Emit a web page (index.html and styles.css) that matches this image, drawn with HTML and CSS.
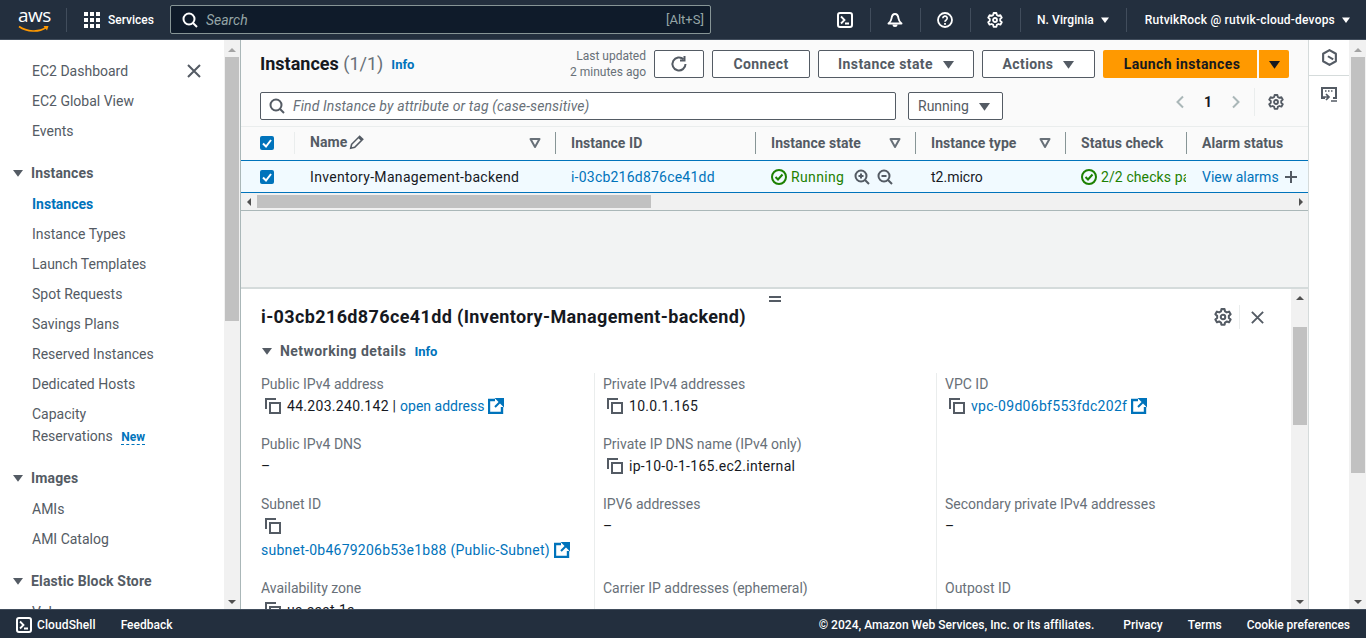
FILE: index.html
```html
<!DOCTYPE html>
<html lang="en">
<head>
  <meta charset="UTF-8" />
  <title>Instances | EC2</title>
  <link rel="stylesheet" href="styles.css">
</head>
<body>
  <svg class="defs" width="0" height="0">
    <symbol id="i-caret" viewBox="0 0 16 16"><path d="M0 3h16L8 14z" fill="currentColor"/></symbol>
    <symbol id="i-filter" viewBox="0 0 12 12"><path d="M1.5 2h9L6 10z" fill="none" stroke="currentColor" stroke-width="2" stroke-linejoin="round"/></symbol>
    <symbol id="i-search" viewBox="0 0 16 16"><circle cx="7" cy="7" r="5.5" fill="none" stroke="currentColor" stroke-width="2"/><path d="M11 11l4 4" stroke="currentColor" stroke-width="2" fill="none"/></symbol>
    <symbol id="i-gear" viewBox="0 0 16 16"><path d="M6.6 1h2.8l.4 2 1.6.9 2-.7 1.4 2.4-1.6 1.4v1.9l1.6 1.4-1.4 2.4-2-.7-1.6.9-.4 2H6.6l-.4-2-1.6-.9-2 .7-1.4-2.4 1.6-1.4V7L1.2 5.6l1.4-2.4 2 .7 1.6-.9z" fill="none" stroke="currentColor" stroke-width="1.8" stroke-linejoin="round"/><circle cx="8" cy="8" r="2" fill="none" stroke="currentColor" stroke-width="1.8"/></symbol>
    <symbol id="i-close" viewBox="0 0 16 16"><path d="M2 2l12 12M14 2L2 14" stroke="currentColor" stroke-width="2" fill="none"/></symbol>
    <symbol id="i-copy" viewBox="0 0 16 16"><path d="M1 11V1h10" fill="none" stroke="currentColor" stroke-width="2"/><rect x="5" y="5" width="10" height="10" fill="none" stroke="currentColor" stroke-width="2"/></symbol>
    <symbol id="i-ext" viewBox="0 0 16 16"><path d="M7 2H1v13h13V9" fill="none" stroke="currentColor" stroke-width="2.4"/><path d="M9 1h6v6zM13 3L7 9" fill="currentColor" stroke="currentColor" stroke-width="2"/></symbol>
    <symbol id="i-ok" viewBox="0 0 16 16"><circle cx="8" cy="8" r="7" fill="none" stroke="currentColor" stroke-width="2"/><path d="M4.5 8l2.5 2.5 4.5-5" fill="none" stroke="currentColor" stroke-width="2"/></symbol>
    <symbol id="i-terminal" viewBox="0 0 16 16"><rect x="1" y="1" width="14" height="14" rx="2" fill="none" stroke="currentColor" stroke-width="2"/><path d="M4 4.5L7.5 8 4 11.5M8 11.5h4" fill="none" stroke="currentColor" stroke-width="1.8"/></symbol>
    <symbol id="i-check" viewBox="0 0 14 14"><path d="M3 7.500l3 3 5-6.500" fill="none" stroke="#fff" stroke-width="2"/></symbol>
  </svg>

  <header class="topnav">
    <div class="aws-logo">
      <span class="aws-word">aws</span>
      <svg class="aws-smile" width="32" height="8" viewBox="0 0 32 8"><path d="M1 1.500c8 5.500 20 6 27 1" fill="none" stroke="#f90" stroke-width="1.600"/><path d="M25.500 1h5l-1.500 4.500z" fill="#f90"/></svg>
    </div>
    <span class="nav-sep"></span>
    <div class="services">
      <svg width="16" height="16" viewBox="0 0 16 16" fill="#fff"><rect width="4" height="4"/><rect x="6" width="4" height="4"/><rect x="12" width="4" height="4"/><rect y="6" width="4" height="4"/><rect x="6" y="6" width="4" height="4"/><rect x="12" y="6" width="4" height="4"/><rect y="12" width="4" height="4"/><rect x="6" y="12" width="4" height="4"/><rect x="12" y="12" width="4" height="4"/></svg>
      <span>Services</span>
    </div>
    <div class="nav-search">
      <svg class="ico16"><use href="#i-search"/></svg>
      <span class="nav-search-text">Search</span>
      <span class="nav-search-key">[Alt+S]</span>
    </div>
    <div class="nav-icons">
      <span class="nav-icon"><svg class="ico16"><use href="#i-terminal"/></svg></span>
      <span class="nav-icon"><svg class="ico16" viewBox="0 0 16 16"><path d="M8 2C5.500 2 4.800 4 4.500 6.500 4.200 9 3 10 1.500 11.500h13C13 10 11.800 9 11.500 6.500 11.200 4 10.500 2 8 2z" fill="none" stroke="currentColor" stroke-width="1.900" stroke-linejoin="round"/><path d="M5.500 12.500a2.500 2.500 0 0 0 5 0z" fill="currentColor"/></svg></span>
      <span class="nav-icon"><svg class="ico16" viewBox="0 0 16 16"><circle cx="8" cy="8" r="7" fill="none" stroke="currentColor" stroke-width="1.800"/><path d="M5.800 6.200a2.200 2.200 0 1 1 3.200 2c-.7.400-1 .8-1 1.600" fill="none" stroke="currentColor" stroke-width="1.700"/><rect x="7.100" y="11" width="1.800" height="1.800" fill="currentColor"/></svg></span>
      <span class="nav-icon last"><svg class="ico16"><use href="#i-gear"/></svg></span>
    </div>
    <div class="nav-menu region">N. Virginia <svg class="ico8"><use href="#i-caret"/></svg></div>
    <div class="nav-menu account">RutvikRock @ rutvik-cloud-devops <svg class="ico8"><use href="#i-caret"/></svg></div>
  </header>

  <div class="main">
    <nav class="sidebar">
      <svg class="side-close"><use href="#i-close"/></svg>
      <a class="side-link">EC2 Dashboard</a>
      <a class="side-link">EC2 Global View</a>
      <a class="side-link">Events</a>
      <div class="side-group"><svg class="ico10"><use href="#i-caret"/></svg>Instances</div>
      <a class="side-link current">Instances</a>
      <a class="side-link">Instance Types</a>
      <a class="side-link">Launch Templates</a>
      <a class="side-link">Spot Requests</a>
      <a class="side-link">Savings Plans</a>
      <a class="side-link">Reserved Instances</a>
      <a class="side-link">Dedicated Hosts</a>
      <a class="side-link two-line">Capacity<br>Reservations <span class="new-tag">New</span></a>
      <div class="side-group"><svg class="ico10"><use href="#i-caret"/></svg>Images</div>
      <a class="side-link">AMIs</a>
      <a class="side-link">AMI Catalog</a>
      <div class="side-group"><svg class="ico10"><use href="#i-caret"/></svg>Elastic Block Store</div>
      <a class="side-link">Volumes</a>
    </nav>
    <div class="vscroll side-scroll">
      <span class="arrow-up"></span>
      <span class="thumb"></span>
      <span class="arrow-down"></span>
    </div>

    <div class="content">
      <section class="list-panel">
        <div class="toolbar">
          <h1 class="panel-title">Instances <span class="count">(1/1)</span></h1>
          <a class="info">Info</a>
          <div class="updated">Last updated<br>2 minutes ago</div>
          <button class="btn btn-icon"><svg class="ico18" viewBox="0 0 18 18"><path d="M15.500 9a6.500 6.500 0 1 1-2-4.700" fill="none" stroke="currentColor" stroke-width="2"/><path d="M14.500 1v4.500H10" fill="none" stroke="currentColor" stroke-width="2"/></svg></button>
          <button class="btn btn-connect">Connect</button>
          <button class="btn btn-state">Instance state <svg class="ico11"><use href="#i-caret"/></svg></button>
          <button class="btn btn-actions">Actions <svg class="ico11"><use href="#i-caret"/></svg></button>
          <button class="btn-primary">Launch instances</button>
          <button class="btn-primary btn-split"><svg class="ico11"><use href="#i-caret"/></svg></button>
        </div>
        <div class="filterbar">
          <div class="filter-input"><svg class="ico16"><use href="#i-search"/></svg><span>Find Instance by attribute or tag (case-sensitive)</span></div>
          <div class="filter-select">Running <svg class="ico11"><use href="#i-caret"/></svg></div>
          <div class="pager">
            <svg class="pager-arrow" viewBox="0 0 10 14"><path d="M8 1.500L2.500 7 8 12.500" fill="none" stroke="currentColor" stroke-width="2"/></svg>
            <b>1</b>
            <svg class="pager-arrow" viewBox="0 0 10 14"><path d="M2 1.500L7.500 7 2 12.500" fill="none" stroke="currentColor" stroke-width="2"/></svg>
          </div>
          <div class="pager-gear"><svg class="ico16"><use href="#i-gear"/></svg></div>
        </div>

        <div class="table">
          <div class="row head">
            <div class="cell cell-check"><span class="checkbox"><svg width="14" height="14"><use href="#i-check"/></svg></span></div>
            <div class="cell sep-light"><span class="name-head">Name <svg class="ico16" viewBox="0 0 14 14"><path d="M1.500 12.500l.8-3.500 7-7 2.700 2.700-7 7zM8.500 3l2.500 2.500" fill="none" stroke="currentColor" stroke-width="1.400"/></svg></span><svg class="filter-ico"><use href="#i-filter"/></svg></div>
            <div class="cell sep">Instance ID</div>
            <div class="cell sep">Instance state<svg class="filter-ico"><use href="#i-filter"/></svg></div>
            <div class="cell sep">Instance type<svg class="filter-ico"><use href="#i-filter"/></svg></div>
            <div class="cell sep">Status check</div>
            <div class="cell sep">Alarm status</div>
          </div>
          <div class="row selected">
            <div class="cell cell-check"><span class="checkbox"><svg width="14" height="14"><use href="#i-check"/></svg></span></div>
            <div class="cell cell-name">Inventory-Management-backend</div>
            <div class="cell cell-id link">i-03cb216d876ce41dd</div>
            <div class="cell state"><span class="ok"><svg class="ico16"><use href="#i-ok"/></svg><span class="ok-text">Running</span></span>
              <svg class="zoom-ico" viewBox="0 0 16 16"><circle cx="7" cy="7" r="5.500" fill="none" stroke="currentColor" stroke-width="2"/><path d="M11 11l4 4M4.500 7h5M7 4.500v5" fill="none" stroke="currentColor" stroke-width="2"/></svg>
              <svg class="zoom-ico" viewBox="0 0 16 16"><circle cx="7" cy="7" r="5.500" fill="none" stroke="currentColor" stroke-width="2"/><path d="M11 11l4 4M4.500 7h5" fill="none" stroke="currentColor" stroke-width="2"/></svg>
            </div>
            <div class="cell">t2.micro</div>
            <div class="cell clip"><span class="ok"><svg class="ico16"><use href="#i-ok"/></svg>2/2 checks passed</span></div>
            <div class="cell"><span class="link">View alarms</span><svg class="plus-ico" viewBox="0 0 14 14"><path d="M7 1v12M1 7h12" stroke="currentColor" stroke-width="2"/></svg></div>
          </div>
        </div>
        <div class="hscroll">
          <span class="arrow-left"></span>
          <span class="hthumb"></span>
          <span class="arrow-right"></span>
        </div>
      </section>

      <div class="gap-area"></div>

      <section class="split">
        <span class="split-handle"></span>
        <div class="split-body">
          <div class="split-head">
            <h2 class="split-title">i-03cb216d876ce41dd (Inventory-Management-backend)</h2>
            <svg class="ico18 split-gear"><use href="#i-gear"/></svg>
            <span class="split-sep"></span>
            <svg class="ico14 split-close"><use href="#i-close"/></svg>
          </div>
          <div class="expander"><svg class="ico10"><use href="#i-caret"/></svg><b>Networking details</b><a class="info">Info</a></div>
          <div class="details">
            <div class="col">
              <div class="field"><label>Public IPv4 address</label><div class="val"><svg class="copy"><use href="#i-copy"/></svg>44.203.240.142 | <a class="link addr">open address</a><svg class="ext"><use href="#i-ext"/></svg></div></div>
              <div class="field"><label>Public IPv4 DNS</label><div class="val">–</div></div>
              <div class="field"><label>Subnet ID</label><div class="val"><svg class="copy"><use href="#i-copy"/></svg></div><div class="val-line"><a class="link">subnet-0b4679206b53e1b88 (Public-Subnet)</a><svg class="ext"><use href="#i-ext"/></svg></div></div>
              <div class="field"><label>Availability zone</label><div class="val"><svg class="copy"><use href="#i-copy"/></svg>us-east-1a</div></div>
            </div>
            <div class="col">
              <div class="field"><label>Private IPv4 addresses</label><div class="val"><svg class="copy"><use href="#i-copy"/></svg>10.0.1.165</div></div>
              <div class="field"><label>Private IP DNS name (IPv4 only)</label><div class="val"><svg class="copy"><use href="#i-copy"/></svg>ip-10-0-1-165.ec2.internal</div></div>
              <div class="field tall"><label>IPV6 addresses</label><div class="val">–</div></div>
              <div class="field"><label>Carrier IP addresses (ephemeral)</label><div class="val">–</div></div>
            </div>
            <div class="col">
              <div class="field"><label>VPC ID</label><div class="val"><svg class="copy"><use href="#i-copy"/></svg><a class="link">vpc-09d06bf553fdc202f</a><svg class="ext"><use href="#i-ext"/></svg></div></div>
              <div class="field empty"></div>
              <div class="field tall"><label>Secondary private IPv4 addresses</label><div class="val">–</div></div>
              <div class="field"><label>Outpost ID</label><div class="val">–</div></div>
            </div>
          </div>
        </div>
        <div class="vscroll split-scroll">
          <span class="arrow-up"></span>
          <span class="thumb"></span>
          <span class="arrow-down"></span>
        </div>
      </section>
    </div>

    <aside class="rail">
      <div class="rail-item"><svg width="17" height="17" viewBox="0 0 16 16"><path d="M8 1l6 3.500v7L8 15l-6-3.500v-7z" fill="none" stroke="currentColor" stroke-width="2" stroke-linejoin="round"/><path d="M7 6l5 3-1 1.500-5-3z" fill="currentColor"/></svg></div>
      <div class="rail-item"><svg width="18" height="18" viewBox="0 0 18 18"><path d="M5 12H2V2h14v10h-3" fill="none" stroke="currentColor" stroke-width="2"/><path d="M5 5h1.500M8 5h1.500M11 5h1.500M3 11h5M6 8l3 3-3 3M11 15h6" fill="none" stroke="currentColor" stroke-width="1.700"/></svg></div>
    </aside>
    <div class="vscroll page-scroll">
      <span class="arrow-up"></span>
      <span class="thumb"></span>
      <span class="arrow-down"></span>
    </div>
  </div>

  <footer class="bottombar">
    <svg class="ico16"><use href="#i-terminal"/></svg>
    <span class="foot-shell">CloudShell</span>
    <span class="foot-feedback">Feedback</span>
    <span class="foot-copy">© 2024, Amazon Web Services, Inc. or its affiliates.</span>
    <span class="foot-link first">Privacy</span>
    <span class="foot-link">Terms</span>
    <span class="foot-link last">Cookie preferences</span>
  </footer>
</body>
</html>
```

FILE: styles.css
```css
* { margin: 0; padding: 0; box-sizing: border-box; }
html, body { height: 100%; overflow: hidden; }
body {
  display: flex;
  flex-direction: column;
  font-family: 'Roboto', 'Noto Sans', sans-serif;
  font-size: 14px;
  color: #16191f;
  background: #fff;
}
.defs { position: absolute; }
.ico8 { width: 8px; height: 8px; }
.ico10 { width: 10px; height: 10px; }
.ico11 { width: 11px; height: 11px; }
.ico14 { width: 14px; height: 14px; }
.ico16 { width: 16px; height: 16px; }
.ico18 { width: 18px; height: 18px; }
.link, a.link { color: #0073bb; }

/* top nav */
.topnav {
  flex: 0 0 40px;
  display: flex;
  align-items: center;
  background: #232f3e;
  border-bottom: 1px solid #414d5c;
  color: #fff;
  font-size: 12px;
  font-weight: 500;
}
.aws-logo {
  width: 31px;
  margin-left: 18px;
  position: relative;
  height: 30px;
}
.aws-word {
  display: block;
  font-family: 'Open Sans', sans-serif;
  font-size: 19px;
  line-height: 20px;
  letter-spacing: -0.5px;
  font-weight: 400;
}
.aws-smile { position: absolute; left: 0; top: 20px; }
.nav-sep { width: 1px; height: 24px; background: #414d5c; margin-left: 17px; }
.services { display: flex; align-items: center; gap: 8px; margin-left: 17px; }
.nav-search {
  width: 541px;
  height: 29px;
  margin-left: 16px;
  display: flex;
  align-items: center;
  background: #0f1b2a;
  border: 1px solid #879596;
  border-radius: 2px;
  padding: 0 6px 0 11px;
  font-weight: 400;
}
.nav-search-text { font-style: italic; font-size: 14px; color: #95a5a6; margin-left: 8px; }
.nav-search-key { margin-left: auto; color: #95a5a6; font-size: 13px; }
.nav-icons { display: flex; margin-left: 110px; }
.nav-icon {
  width: 50px;
  height: 24px;
  display: flex;
  align-items: center;
  justify-content: center;
  border-right: 1px solid #414d5c;
}
.nav-menu { display: flex; align-items: center; gap: 7px; white-space: nowrap; letter-spacing: .1px; }
.region { margin-left: 16px; padding-right: 17px; height: 24px; border-right: 1px solid #414d5c; }
.account { margin-left: 18px; letter-spacing: .2px; }

/* main area */
.main { flex: 1; display: flex; min-height: 0; }
.sidebar {
  flex: 0 0 224px;
  position: relative;
  padding-top: 16px;
  overflow: hidden;
  color: #545b64;
}
.side-close { position: absolute; left: 186px; top: 23px; width: 16px; height: 16px; }
.side-link {
  display: block;
  height: 30px;
  line-height: 30px;
  padding-left: 32px;
}
.side-link.current { color: #0073bb; font-weight: 700; }
.side-link.two-line { height: 52px; line-height: 22px; padding-top: 4px; }
.side-group {
  height: 30px;
  line-height: 30px;
  margin: 12px 0 1px;
  display: flex;
  align-items: center;
  gap: 8px;
  padding-left: 13px;
  font-weight: 700;
  letter-spacing: .15px;
}
.new-tag {
  color: #0073bb;
  font-size: 12px;
  font-weight: 700;
  margin-left: 5px;
  border-bottom: 1px dashed #0073bb;
}

/* fake scrollbars */
.vscroll {
  flex: 0 0 16px;
  background: #f1f1f1;
  position: relative;
  display: flex;
  flex-direction: column;
  align-items: center;
}
.thumb { width: 14px; background: #c1c1c1; }
.arrow-up, .arrow-down, .arrow-left, .arrow-right { width: 0; height: 0; border: 4px solid transparent; flex: none; }
.arrow-up { border-bottom-color: #a3a3a3; margin-top: 4px; }
.arrow-down { border-top-color: #505050; margin-top: auto; margin-bottom: 1px; }
.side-scroll .thumb { height: 264px; margin-top: 5px; }
.page-scroll { flex-basis: 17px; }
.page-scroll .thumb { height: 416px; margin-top: 5px; }
.split-scroll .arrow-up { margin-top: 3px; border-bottom-color: #505050; }
.split-scroll .thumb { height: 98px; margin-top: 27px; }

/* content */
.content {
  flex: 0 0 1069px;
  display: flex;
  flex-direction: column;
  border-left: 1px solid #aab7b8;
  border-right: 1px solid #d5dbdb;
  background: #f2f3f3;
  min-width: 0;
}
.list-panel { flex: 0 0 171px; background: #fafafa; border-bottom: 1px solid #aab7b8; overflow: hidden; }
.toolbar {
  display: flex;
  align-items: center;
  height: 28px;
  margin: 10px 19px 0 19px;
}
.panel-title { font-size: 18px; font-weight: 700; line-height: 26px; }
.count { color: #687078; font-weight: 400; }
.info { color: #0073bb; font-size: 13px; font-weight: 700; margin-left: 8px; }
.updated {
  margin-left: auto;
  margin-right: 8px;
  text-align: right;
  font-size: 12px;
  line-height: 16px;
  color: #687078;
}
.btn {
  height: 28px;
  display: flex;
  align-items: center;
  justify-content: center;
  gap: 10px;
  background: #fff;
  border: 1px solid #545b64;
  border-radius: 2px;
  color: #545b64;
  font-family: inherit;
  font-size: 14px;
  font-weight: 700;
  letter-spacing: .4px;
  margin-right: 8px;
}
.btn-icon { width: 50px; }
.btn-connect { width: 98px; }
.btn-state { width: 156px; }
.btn-actions { width: 113px; }
.btn-primary {
  height: 28px;
  width: 154px;
  padding-left: 4px;
  background: #f90;
  border: none;
  border-radius: 2px 0 0 2px;
  color: #16191f;
  font-family: inherit;
  font-size: 14px;
  font-weight: 700;
  letter-spacing: .4px;
}
.btn-split {
  width: 30px;
  margin-left: 2px;
  padding-left: 0;
  border-radius: 0 2px 2px 0;
  display: flex;
  align-items: center;
  justify-content: center;
}
.filterbar {
  display: flex;
  align-items: center;
  height: 28px;
  margin: 14px 19px 0 19px;
}
.filter-input {
  width: 636px;
  height: 28px;
  display: flex;
  align-items: center;
  gap: 8px;
  padding-left: 8px;
  background: #fff;
  border: 1px solid #545b64;
  border-radius: 2px;
  color: #545b64;
}
.filter-input span { font-style: italic; color: #687078; letter-spacing: .12px; }
.filter-select {
  width: 95px;
  height: 28px;
  margin-left: 12px;
  display: flex;
  align-items: center;
  justify-content: space-between;
  padding: 0 12px 0 9px;
  background: #fff;
  border: 1px solid #545b64;
  border-radius: 2px;
  color: #545b64;
}
.pager { display: flex; align-items: center; gap: 19px; color: #16191f; margin: -8px 13px 0 auto; }
.pager-arrow { width: 10px; height: 14px; color: #aab7b8; }
.pager-gear {
  color: #545b64;
  padding-left: 13px;
  border-left: 1px solid #eaeded;
  height: 28px;
  width: 35px;
  display: flex;
  align-items: center;
  margin-top: -8px;
}

/* table */
.table { margin-top: 6px; border-top: 1px solid #eaeded; }
.row {
  display: grid;
  grid-template-columns: 53px 261px 200px 160px 150px 121px 122px;
  height: 33px;
  align-items: center;
}
.row.head { color: #545b64; font-weight: 700; background: #fafafa; letter-spacing: .05px; }
.row.head .cell { margin-top: -2px; }
.row.selected { background: #f1faff; border-top: 1px solid #0073bb; border-bottom: 1px solid #0073bb; }
.cell {
  position: relative;
  padding-left: 16px;
  white-space: nowrap;
  overflow: hidden;
  display: flex;
  align-items: center;
  height: 22px;
}
.cell-check { padding-left: 19px; }
.cell-name { letter-spacing: .32px; }
.cell-id { letter-spacing: .22px; }
.sep { border-left: 1px solid #879596; padding-left: 15px; }
.sep-light { border-left: 1px solid #eaeded; padding-left: 15px; }
.name-head { display: flex; align-items: center; gap: 2px; margin-top: -2px; }
.filter-ico { width: 12px; height: 12px; margin-left: auto; margin-right: 14px; color: #687078; }
.checkbox {
  width: 14px;
  height: 14px;
  background: #0073bb;
  border-radius: 2px;
  display: block;
}
.checkbox svg { display: block; }
.ok { display: inline-flex; align-items: center; gap: 4px; color: #1d8102; letter-spacing: .1px; }
.ok-text { letter-spacing: .35px; }
.state { overflow: visible; }
.zoom-ico { width: 16px; height: 16px; color: #545b64; margin-left: 10px; flex: none; }
.zoom-ico + .zoom-ico { margin-left: 7px; }
.clip .ok { flex: none; }
.plus-ico { width: 14px; height: 14px; margin-left: 5px; color: #545b64; flex: none; }

.hscroll { height: 17px; background: #f1f1f1; display: flex; align-items: center; }
.arrow-left { border-right-color: #505050; margin-left: 2px; }
.hthumb { width: 394px; height: 13px; background: #c1c1c1; margin-left: 6px; }
.arrow-right { border-left-color: #505050; margin-left: auto; margin-right: 1px; }

.gap-area { flex: 0 0 78px; border-bottom: 2px solid #d5dbdb; }

/* split panel */
.split { flex: 1; min-height: 0; display: flex; background: #fff; position: relative; overflow: hidden; }
.split-handle {
  position: absolute;
  left: 528px;
  top: 7px;
  width: 12px;
  height: 6px;
  border-top: 2px solid #545b64;
  border-bottom: 2px solid #545b64;
}
.split-body { flex: 1; padding: 16px 20px 0; min-width: 0; overflow: hidden; }
.split-head { display: flex; align-items: center; height: 24px; }
.split-title { font-size: 18px; font-weight: 700; line-height: 24px; letter-spacing: .37px; }
.split-gear { margin-left: auto; color: #545b64; }
.split-sep { width: 1px; height: 24px; background: #eaeded; margin: 0 10px 0 7px; }
.split-close { margin-right: 6px; color: #545b64; width: 15px; height: 15px; }
.expander {
  display: flex;
  align-items: center;
  height: 20px;
  margin-top: 12px;
  padding-left: 1px;
  color: #545b64;
}
.expander b { margin-left: 8px; letter-spacing: .45px; }
.details { display: grid; grid-template-columns: 342px 342px 1fr; margin-top: 12px; height: 300px; }
.col { border-left: 1px solid #eaeded; padding-left: 8px; margin-left: -9px; }
.col:first-child { border-left: none; padding-left: 0; margin-left: 0; }
.field { height: 60px; }
.field.tall, .field:nth-child(3) { height: 84px; }
.field label { display: block; color: #687078; height: 22px; line-height: 22px; }
.val, .val-line { display: flex; align-items: center; height: 22px; white-space: pre; color: #16191f; letter-spacing: .3px; }
.val-line { height: 22px; margin-top: 2px; letter-spacing: .25px; }
.addr { letter-spacing: 0; }
.copy { width: 16px; height: 16px; color: #545b64; margin: 0 6px 0 4px; flex: none; }
.ext { width: 16px; height: 16px; color: #0073bb; margin-left: 4px; flex: none; }
.split-scroll { flex-basis: 17px; }

/* right rail */
.rail { flex: 0 0 40px; background: #fff; color: #545b64; }
.rail-item {
  height: 36px;
  display: flex;
  align-items: center;
  justify-content: center;
  border-bottom: 1px solid #d5dbdb;
}
.rail-item:last-child { border-bottom: none; padding-top: 2px; }

/* footer */
.bottombar {
  flex: 0 0 29px;
  display: flex;
  align-items: center;
  padding: 2px 16px 0;
  background: #232f3e;
  border-top: 1px solid #414d5c;
  color: #fff;
  font-size: 12px;
  font-weight: 500;
}
.foot-shell { margin-left: 5px; letter-spacing: .1px; }
.foot-feedback { margin-left: 25px; }
.foot-copy { margin-left: auto; letter-spacing: .03px; }
.foot-link { margin-left: 25px; }
.foot-link.first { margin-left: 29px; }
.foot-link.last { letter-spacing: -.05px; }
```
